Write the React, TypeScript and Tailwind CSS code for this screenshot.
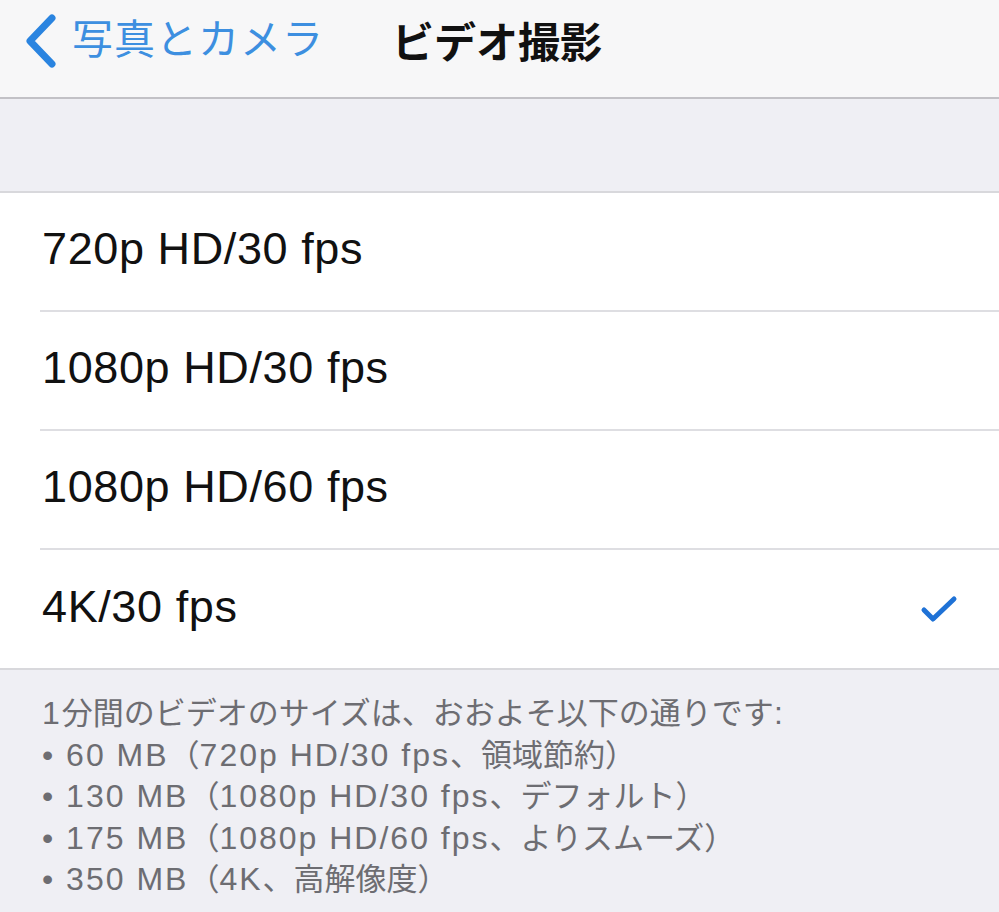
const rows = ["720p HD/30 fps", "1080p HD/30 fps", "1080p HD/60 fps", "4K/30 fps"];

// [text, latin?] segments; latin parts get the wide iOS tracking
type Seg = [string, boolean];

const notes: Seg[][] = [
  [["1", true], ["分間のビデオのサイズは、おおよそ以下の通りです", false], [":", true]],
  [["• 60 MB", true], ["（", false], ["720p HD/30 fps", true], ["、領域節約）", false]],
  [["• 130 MB", true], ["（", false], ["1080p HD/30 fps", true], ["、デフォルト）", false]],
  [["• 175 MB", true], ["（", false], ["1080p HD/60 fps", true], ["、よりスムーズ）", false]],
  [["• 350 MB", true], ["（", false], ["4K", true], ["、高解像度）", false]],
];

export default function App() {
  return (
    <div
      className="w-[999px] h-[912px] overflow-hidden bg-[#efeff4]"
      style={{ fontFamily: '"Liberation Sans", "Noto Sans CJK JP", sans-serif' }}
    >
      {/* Nav bar */}
      <div className="h-[99px] bg-[#f7f7f8] border-b-2 border-[#c2c1c6] flex items-start">
        <div className="flex items-center h-[82px] pl-[22px]">
          <svg width="36" height="56" viewBox="0 0 36 56" fill="none">
            <path
              d="M30 5 L8 28 L30 51"
              stroke="#2a84e0"
              strokeWidth="7"
              strokeLinecap="round"
              strokeLinejoin="round"
            />
          </svg>
          <span className="ml-[14px] text-[41px] text-[#3d8fe0] tracking-[1px]">
            写真とカメラ
          </span>
          <span className="ml-[68px] pt-[4px] text-[42px] font-bold text-[#111]">
            ビデオ撮影
          </span>
        </div>
      </div>

      {/* Spacer */}
      <div className="h-[92px]" />

      {/* List */}
      <div className="bg-white border-t-2 border-b-2 border-[#d8d8dc]">
        {rows.map((r, i) => (
          <div key={r} className="pl-[40px]">
            <div
              className={
                i < rows.length - 1
                  ? "h-[119px] pb-[5px] flex items-center justify-between pr-[40px] border-b-2 border-[#dedee2]"
                  : "h-[118px] pb-[5px] flex items-center justify-between pr-[40px]"
              }
            >
              <span className="text-[45px] tracking-[0.6px] text-[#111] pl-[2px]">{r}</span>
              {r === "4K/30 fps" && (
                <svg width="40" height="32" viewBox="0 0 40 32" fill="none" className="mt-[4px]">
                  <path
                    d="M5 17 L14 26 L35 6"
                    stroke="#1f72d6"
                    strokeWidth="5"
                    strokeLinecap="round"
                    strokeLinejoin="round"
                  />
                </svg>
              )}
            </div>
          </div>
        ))}
      </div>

      {/* Footer notes */}
      <div className="pl-[42px] pt-[23px] text-[31px] leading-[41.5px] text-[#6d6d72] whitespace-nowrap">
        {notes.map((line, i) => (
          <div key={i}>
            {line.map(([t, latin], j) =>
              latin ? (
                <span key={j} className="text-[32px] tracking-[2px]">
                  {t}
                </span>
              ) : (
                <span key={j}>{t}</span>
              )
            )}
          </div>
        ))}
      </div>
    </div>
  );
}
